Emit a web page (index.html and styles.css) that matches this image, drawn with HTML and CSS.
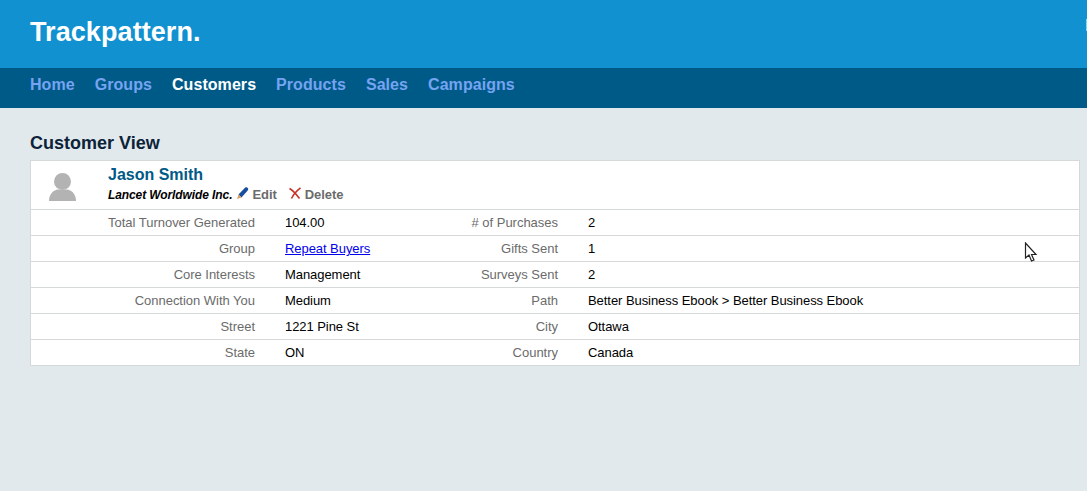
FILE: index.html
```html
<!DOCTYPE html>
<html lang="en">
<head>
<meta charset="utf-8">
<title>Trackpattern</title>
<link rel="stylesheet" href="styles.css">
</head>
<body>
<header class="brand-bar">
  <h1 class="brand">Trackpattern.</h1>
  <span class="edge-mark"></span>
</header>
<nav class="nav">
  <a href="#">Home</a>
  <a href="#">Groups</a>
  <a href="#" class="active">Customers</a>
  <a href="#">Products</a>
  <a href="#">Sales</a>
  <a href="#">Campaigns</a>
</nav>
<main class="main">
  <h2 class="page-title">Customer View</h2>
  <section class="card">
    <div class="head">
      <div class="avatar">
        <svg width="28" height="28" viewBox="0 0 28 28"><circle cx="13.500" cy="8.500" r="8.500" fill="#b3b3b3"/><path d="M0 28c0-6.500 3.500-10 8-11.500h11c4.500 1.500 8 5 8 11.500z" fill="#b3b3b3"/></svg>
      </div>
      <div class="head-text">
        <div class="name">Jason Smith</div>
        <div class="sub">
          <em class="company">Lancet Worldwide Inc.</em>
          <a href="#" class="action">
            <svg width="13" height="13" viewBox="0 0 13 13"><path d="M2.500 7.500 9 .8c.9-.7 2-.6 2.700.1s.7 1.700 0 2.500L5.500 10.500z" fill="#174f9e"/><path d="M2.500 7.500 1 12l4.500-1.500z" fill="#d9a05b"/></svg>
            Edit
          </a>
          <a href="#" class="action delete">
            <svg width="13" height="13" viewBox="0 0 13 13"><path d="M.5 1.500C4 3.500 7.500 7.500 10.500 11.500M11.500 .8C8 3.500 4.500 7 2.500 11.500" fill="none" stroke="#c8322b" stroke-width="1.600"/></svg>
            Delete
          </a>
        </div>
      </div>
    </div>
    <div class="row">
      <span class="label">Total Turnover Generated</span><span class="value">104.00</span>
      <span class="label">&#35; of Purchases</span><span class="value">2</span>
    </div>
    <div class="row">
      <span class="label">Group</span><span class="value"><a href="#" class="link">Repeat Buyers</a></span>
      <span class="label">Gifts Sent</span><span class="value">1</span>
    </div>
    <div class="row">
      <span class="label">Core Interests</span><span class="value">Management</span>
      <span class="label">Surveys Sent</span><span class="value">2</span>
    </div>
    <div class="row">
      <span class="label">Connection With You</span><span class="value">Medium</span>
      <span class="label">Path</span><span class="value">Better Business Ebook &gt; Better Business Ebook</span>
    </div>
    <div class="row">
      <span class="label">Street</span><span class="value">1221 Pine St</span>
      <span class="label">City</span><span class="value">Ottawa</span>
    </div>
    <div class="row">
      <span class="label">State</span><span class="value">ON</span>
      <span class="label">Country</span><span class="value">Canada</span>
    </div>
    <svg class="cursor" width="14" height="21" viewBox="0 0 14 21"><path d="M1.500 1v15l3.500-3 2.500 6 2.500-1-2.500-5.500h4.500z" fill="#fff" stroke="#222" stroke-width="1.200"/></svg>
  </section>
</main>
</body>
</html>
```
FILE: styles.css
```css
* { box-sizing: border-box; }
html, body { margin: 0; height: 100%; }
body {
  background: #e1e9ec;
  font-family: "Liberation Sans", Arial, sans-serif;
  font-size: 13px;
  color: #000;
  overflow: hidden;
}
.brand-bar {
  position: relative;
  height: 68px;
  background: #1191d0;
  padding: 0 30px 4px;
  display: flex;
  align-items: center;
}
.brand { margin: 0; color: #fff; font-size: 27px; font-weight: 700; line-height: 32px; letter-spacing: 0.08px; }
.edge-mark { position: absolute; right: 0; top: 19px; width: 1px; height: 12px; background: #7fdcf5; }
.nav {
  height: 40px;
  background: #005a87;
  padding: 0 30px 7px;
  display: flex;
  align-items: center;
  gap: 20px;
  font-size: 16px;
  font-weight: 700;
  letter-spacing: 0.06px;
}
.nav a { color: #74a4f2; text-decoration: none; }
.nav a.active { color: #fff; }
.main { padding: 25px 7px 0 30px; }
.page-title { margin: 0 0 6px; font-size: 18px; line-height: 21px; color: #0c2238; font-weight: 700; }
.card { position: relative; background: #fff; border: 1px solid #d5d9d9; }
.head { height: 48px; display: flex; }
.avatar { width: 77px; padding: 12px 0 0 18px; }
.avatar svg { display: block; }
.name { margin-top: 4px; font-size: 16px; line-height: 19px; font-weight: 700; color: #005a87; }
.sub { margin-top: 2px; display: flex; align-items: center; font-size: 13px; line-height: 18px; }
.company { font-size: 12px; font-weight: 700; color: #000; margin-right: 4px; letter-spacing: -0.1px; }
.action { display: flex; align-items: center; gap: 3px; color: #6b6b6b; font-weight: 700; text-decoration: none; margin-right: 12px; letter-spacing: -0.05px; }
.action svg { margin-top: -3px; }
.row {
  display: grid;
  grid-template-columns: 224px 188px 115px 1fr;
  height: 26px;
  border-top: 1px solid #d5d9d9;
  align-items: center;
}
.label { color: #6b6b6b; text-align: right; white-space: nowrap; letter-spacing: -0.02px; }
.value { padding-left: 30px; white-space: nowrap; letter-spacing: -0.06px; }
.link { color: #0000ee; text-decoration: underline; }
.cursor { position: absolute; left: 993px; top: 81px; }
```
